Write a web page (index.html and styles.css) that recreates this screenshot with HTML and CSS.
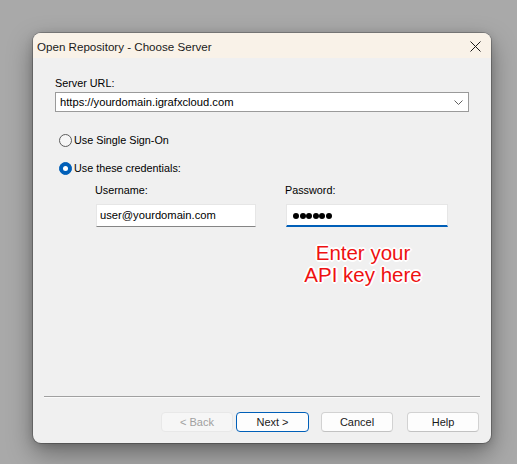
FILE: index.html
```html
<!DOCTYPE html>
<html>
<head>
<meta charset="utf-8">
<link rel="stylesheet" href="styles.css">
</head>
<body>
<div class="window">
  <div class="titlebar">
    <span class="title">Open Repository - Choose Server</span>
    <svg class="close" width="11" height="11" viewBox="0 0 11 11"><path d="M0.5 0.5 L10.5 10.5 M10.5 0.5 L0.5 10.5" stroke="#1a1a1a" stroke-width="1" fill="none"/></svg>
  </div>
  <div class="content">
    <div class="label">Server URL:</div>
    <div class="combo">
      <span class="combo-text">https://yourdomain.igrafxcloud.com</span>
      <svg class="chevron" width="9" height="5" viewBox="0 0 9 5"><path d="M0.5 0.5 L4.5 4.5 L8.5 0.5" stroke="#606060" stroke-width="1" fill="none"/></svg>
    </div>
    <div class="radio-row first">
      <span class="radio"></span><span class="radio-label">Use Single Sign-On</span>
    </div>
    <div class="radio-row second">
      <span class="radio checked"></span><span class="radio-label">Use these credentials:</span>
    </div>
    <div class="creds">
      <div class="field user-field">
        <div class="label">Username:</div>
        <div class="input">user@yourdomain.com</div>
      </div>
      <div class="field pass-field">
        <div class="label">Password:</div>
        <div class="input focused"><span class="dot"></span><span class="dot"></span><span class="dot"></span><span class="dot"></span><span class="dot"></span><span class="dot"></span></div>
        <div class="note">Enter your<br>API key here</div>
      </div>
    </div>
  </div>
  <div class="footer">
    <div class="sep"></div>
    <div class="buttons">
      <div class="btn disabled">&lt; Back</div>
      <div class="btn default">Next &gt;</div>
      <div class="btn cancel">Cancel</div>
      <div class="btn help">Help</div>
    </div>
  </div>
</div>
</body>
</html>
```
FILE: styles.css
```css
html, body {
  margin: 0;
  padding: 0;
}
body {
  width: 517px;
  height: 464px;
  background: #a9a9a9;
  overflow: hidden;
  font-family: "Liberation Sans", Arial, sans-serif;
  font-size: 10.8px;
  color: #000;
}
.window {
  margin: 33px 0 0 33px;
  width: 458px;
  height: 410px;
  background: #f0f0f0;
  border-radius: 8px;
  box-shadow: 0 0 0 1px rgba(0,0,0,0.22), 0 10px 26px rgba(0,0,0,0.38), 0 2px 8px rgba(0,0,0,0.15);
  display: flex;
  flex-direction: column;
  overflow: hidden;
}
.titlebar {
  height: 25px;
  background: #f9f2e8;
  display: flex;
  align-items: center;
  justify-content: space-between;
  padding: 0 10px 0 4px;
  flex: none;
}
.title {
  font-size: 11.6px;
  line-height: 25px;
  padding-top: 1px;
  color: #1a1a1a;
}
.close {
  display: block;
  margin-top: 1px;
}
.content {
  flex: 1;
  padding: 17px 22px 0 22px;
}
.label {
  line-height: 16px;
  height: 16px;
  color: #000;
}
.combo {
  margin-top: 1px;
  height: 18px;
  border: 1px solid #9a9a9a;
  background: #fff;
  display: flex;
  align-items: center;
  justify-content: space-between;
  padding: 0 5px 0 4px;
}
.combo-text {
  line-height: 18px;
  font-size: 11.2px;
}
.chevron {
  display: block;
  margin-top: 1px;
}
.radio-row {
  display: flex;
  align-items: center;
  height: 16px;
}
.radio-row.first {
  margin-top: 20px;
}
.radio-row.second {
  margin-top: 12px;
}
.radio {
  box-sizing: border-box;
  width: 13px;
  height: 13px;
  border-radius: 50%;
  border: 1px solid #5c5c5c;
  background: #f6f6f6;
  margin-left: 4px;
  display: flex;
  align-items: center;
  justify-content: center;
}
.radio.checked {
  border-color: #005fb8;
  background: #005fb8;
}
.radio.checked::after {
  content: "";
  width: 5px;
  height: 5px;
  border-radius: 50%;
  background: #fff;
}
.radio-label {
  margin-left: 2px;
}
.creds {
  margin-top: 6px;
  padding-left: 41px;
  display: flex;
  gap: 30px;
}
.field .label {
  margin-left: -1px;
}
.user-field {
  width: 160px;
}
.pass-field {
  width: 162px;
}
.input {
  margin-top: 6px;
  box-sizing: border-box;
  height: 23px;
  background: #fff;
  border: 1px solid #e6e6e6;
  border-bottom: 1px solid #858585;
  padding-left: 3px;
  line-height: 21px;
  font-size: 11.2px;
  display: flex;
  align-items: center;
}
.input.focused {
  border-bottom: 2px solid #005fb8;
  padding-left: 6px;
  padding-top: 1px;
  gap: 0.6px;
}
.dot {
  width: 6px;
  height: 6px;
  border-radius: 50%;
  background: #000;
}
.note {
  margin-top: 15px;
  padding-right: 8px;
  text-align: center;
  font-size: 20.5px;
  line-height: 22px;
  color: #ee1111;
  text-shadow: 0 0 1px #fff, 1px 1px 0 #fff, -1px -1px 0 #fff, 1px -1px 0 #fff, -1px 1px 0 #fff, 2px 0 0 #fff, -2px 0 0 #fff, 0 2px 0 #fff, 0 -2px 0 #fff, 0 0 3px #fff;
}
.footer {
  flex: none;
  padding-bottom: 11px;
}
.sep {
  margin: 0 11px;
  height: 1px;
  background: #a0a0a0;
  box-shadow: 0 1px 0 #fafafa;
}
.buttons {
  margin-top: 15px;
  display: flex;
  justify-content: flex-end;
  padding-right: 12px;
}
.btn {
  box-sizing: border-box;
  height: 20px;
  width: 72px;
  border-radius: 4px;
  border: 1px solid #d2d2d2;
  border-bottom-color: #c2c2c2;
  background: #fdfdfd;
  display: flex;
  align-items: center;
  justify-content: center;
  color: #1a1a1a;
  font-size: 11px;
}
.btn.disabled {
  background: #f6f6f6;
  border-color: #e8e8e8;
  color: #a0a0a0;
}
.btn.default {
  width: 73px;
  margin-left: 3px;
  border: 1px solid #005fb8;
}
.btn.cancel {
  margin-left: 12px;
}
.btn.help {
  margin-left: 14px;
}
```
